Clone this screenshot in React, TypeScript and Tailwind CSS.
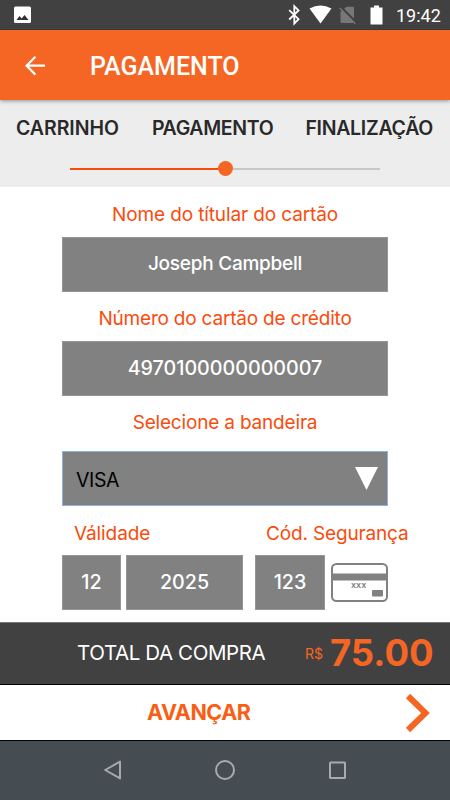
import { useState } from 'react';

const steps = [
    { label: 'CARRINHO', className: 'tracking-[-0.05px]' },
    { label: 'PAGAMENTO', className: 'pl-px tracking-[-0.35px]' },
    { label: 'FINALIZAÇÃO', className: 'tracking-[-0.28px]' },
];

export default function App() {
    const [brand] = useState('VISA');

    return (
        <div className="w-[450px] h-[800px] flex flex-col overflow-hidden bg-white font-['Inter',sans-serif]">
            <StatusBar />

            <header className="relative z-10 h-[70px] shrink-0 flex items-center bg-[#f56624] pl-[25px] pt-0.5 shadow-[0_1px_4px_rgba(60,90,100,0.6)]">
                <button aria-label="Voltar" className="w-5">
                    <svg width="20" height="20" viewBox="0 0 20 20" fill="none" stroke="#fff" strokeWidth="2.2">
                        <path d="M20 9.7H1.8M10.4 0.8L1.5 9.7l8.9 8.9" />
                    </svg>
                </button>
                <h1 className="ml-[45px] pt-px font-['Roboto',sans-serif] text-[25px] leading-[30px] font-medium text-white">PAGAMENTO</h1>
            </header>

            {/* Checkout steps */}
            <section className="h-[87px] shrink-0 bg-[#ededed] pt-4">
                <div className="flex justify-between pl-4 pr-[17px] text-[19.5px] leading-6 font-semibold text-[#292929]">
                    {steps.map((step) => (
                        <span key={step.label} className={step.className}>{step.label}</span>
                    ))}
                </div>
                <div className="mt-[21px] mx-[70px] flex h-[15px] items-center">
                    <div className="h-0.5 w-[147.5px] bg-[#f94c0c]" />
                    <div className="size-[15px] rounded-full bg-[#f56624]" />
                    <div className="h-0.5 flex-1 bg-[#c8c8c8]" />
                </div>
            </section>

            {/* Card form */}
            <main className="h-[435px] shrink-0 flex flex-col pl-[62px] text-[19px] leading-6 text-[#f94c0c]">
                <label className="mt-4 w-[326px] text-center tracking-[-0.12px]">Nome do títular do cartão</label>
                <div className="mt-[10px] flex h-[55px] w-[326px] items-center justify-center border border-[#969696] bg-[#818181] pb-0.5 font-medium text-white tracking-[-0.25px]">Joseph Campbell</div>
                <label className="mt-[15px] w-[326px] text-center tracking-[-0.2px]">Número do cartão de crédito</label>
                <div className="mt-[10px] flex h-[55px] w-[326px] items-center justify-center border border-[#969696] bg-[#818181] pb-0.5 text-[19.7px] font-medium text-white">4970100000000007</div>
                <label className="mt-[15px] w-[326px] text-center tracking-[-0.18px]">Selecione a bandeira</label>
                <div className="mt-4 flex h-[55px] w-[326px] items-center justify-between border border-[#8fb3dc] bg-[#818181] pl-[13px] pr-[9px] text-black">
                    <span className="pt-0.5 text-[19.5px] tracking-[-0.4px]">{brand}</span>
                    <svg width="23" height="23" viewBox="0 0 23 23"><path d="M0 0h23L11.5 23z" fill="#fff" /></svg>
                </div>
                <div className="mt-4 flex">
                    <label className="w-[204px] pl-3 tracking-[-0.1px]">Válidade</label>
                    <label className="tracking-[-0.15px]">Cód. Segurança</label>
                </div>
                <div className="mt-[9px] flex h-[55px] items-center text-[19.7px] font-medium text-white">
                    <div className="flex h-full w-[59px] items-center justify-center border border-[#969696] bg-[#818181] pb-0.5">12</div>
                    <div className="ml-[5px] flex h-full w-[117px] items-center justify-center border border-[#969696] bg-[#818181] pb-0.5">2025</div>
                    <div className="ml-3 flex h-full w-[70px] items-center justify-center border border-[#969696] bg-[#818181] pb-0.5">123</div>
                    <CardBack />
                </div>
            </main>

            <div className="h-[63px] shrink-0 flex items-center border-t border-b border-t-[#777] border-b-black bg-[#414141] pl-[77px]">
                <span className="w-[228px] text-[20.5px] text-white tracking-[-0.4px]">TOTAL DA COMPRA</span>
                <span className="w-[25px] text-[14px] text-[#f56624]">R$</span>
                <span className="text-[36.5px] leading-[44px] font-bold text-[#f56624] pb-0.5">75.00</span>
            </div>

            <button className="h-[56px] shrink-0 flex items-center justify-between border-b border-black bg-white pl-[147px] pr-[20px]">
                <span className="text-[21.5px] font-bold text-[#f95f14] tracking-[-0.45px]">AVANÇAR</span>
                <svg width="25" height="40" viewBox="0 0 25 40" fill="none" stroke="#f56624" strokeWidth="6">
                    <path d="M3 3l17.5 17L3 37" />
                </svg>
            </button>

            <nav className="h-[59px] shrink-0 flex items-center bg-[#454d53]">
                <svg width="450" height="59" viewBox="0 0 450 59" fill="none" stroke="#a7abad" strokeWidth="2">
                    <path d="M105.2 29l14.8-8.4v16.8z" strokeLinejoin="round" />
                    <circle cx="225" cy="29" r="9" />
                    <rect x="330" y="21.5" width="15" height="15.5" rx="0.5" />
                </svg>
            </nav>
        </div>
    );
}

function StatusBar() {
    return (
        <div className="h-[30px] shrink-0 flex items-center bg-[#414141] border-b border-[#343434] text-white">
            <svg width="394" height="29" viewBox="0 0 394 29" fill="#fff">
                <rect x="14" y="6.5" width="17" height="16.5" rx="1.5" />
                <path d="M16.5 20l3-4 2.2 2.4 2.8-3.5 4 5.1z" fill="#303030" />
                <path d="M289.2 10.2l9.4 9-4.3 4.3V6.2l4.3 4.3-9.4 9" fill="none" stroke="#fff" strokeWidth="1.8" />
                <path d="M309.5 8.6Q320.5 2.6 331.5 8.6L320.5 23.4z" />
                <path d="M346.5 6.8h6.5q1 0 1 1V22q0 1-1 1h-11.5q-1 0-1-1V12z" fill="#777" />
                <path d="M341 7.5l16 16" stroke="#414141" strokeWidth="2.6" />
                <path d="M339.7 8l15.7 15.7" stroke="#777" strokeWidth="1.4" />
                <path d="M374 5.5h5v2h3.5v17h-12v-17h3.5z" />
            </svg>
            <span className="ml-[2px] pt-0.5 font-['Roboto',sans-serif] text-[18px] leading-5">19:42</span>
        </div>
    );
}

function CardBack() {
    return (
        <svg width="57" height="39" viewBox="0 0 57 39" className="ml-1.5" fill="none">
            <rect x="1" y="1" width="55" height="37" rx="4.5" stroke="#818181" strokeWidth="2" />
            <path d="M1 10.5h55v7H1z" fill="#818181" />
            <text x="20" y="25" fontSize="9" fontWeight="600" fill="#818181" fontFamily="Inter, sans-serif">xxx</text>
            <rect x="41" y="27" width="11" height="6.5" rx="1" fill="#818181" />
        </svg>
    );
}
